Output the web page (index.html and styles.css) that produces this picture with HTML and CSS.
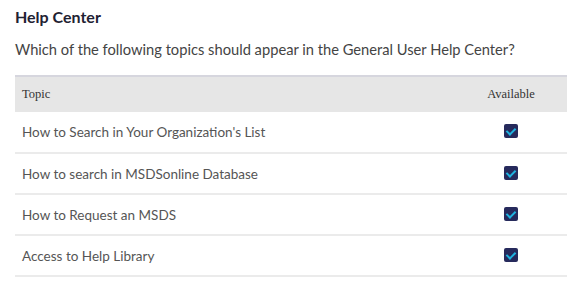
FILE: index.html
```html
<!DOCTYPE html>
<html lang="en">
<head>
    <meta charset="UTF-8">
    <title>Help Center</title>
    <link rel="stylesheet" href="styles.css">
</head>
<body>
    <div class="panel">
        <h2>Help Center</h2>
        <p class="question">Which of the following topics should appear in the General User Help Center?</p>

        <table class="topics">
            <thead>
                <tr>
                    <th class="topic-col">Topic</th>
                    <th class="avail-col">Available</th>
                </tr>
            </thead>
            <tbody>
                <tr>
                    <td>How to Search in Your Organization's List</td>
                    <td class="avail-col"><span class="check"></span></td>
                </tr>
                <tr>
                    <td>How to search in MSDSonline Database</td>
                    <td class="avail-col"><span class="check"></span></td>
                </tr>
                <tr>
                    <td>How to Request an MSDS</td>
                    <td class="avail-col"><span class="check"></span></td>
                </tr>
                <tr>
                    <td>Access to Help Library</td>
                    <td class="avail-col"><span class="check"></span></td>
                </tr>
            </tbody>
        </table>
    </div>
</body>
</html>
```

FILE: styles.css
```css
* {
    box-sizing: border-box;
    margin: 0;
    padding: 0;
}

body {
    font-family: Lato, 'Open Sans', sans-serif;
    background: #fff;
    color: #555;
}

.panel {
    padding: 7px 13px 0 15px;
}

h2 {
    font-size: 16px;
    font-weight: 700;
    color: #1f2233;
    line-height: 20px;
    margin-bottom: 13px;
}

.question {
    font-size: 14.7px;
    color: #444;
    line-height: 18px;
    margin-bottom: 17px;
}

.topics {
    width: 552px;
    border-collapse: collapse;
}

.topics th {
    font-family: 'Liberation Serif', serif;
    font-weight: 400;
    font-size: 12.5px;
    color: #333;
    background: #e6e6e6;
    border-top: 2px solid #d6d6de;
    height: 36px;
    padding: 0 7px;
    text-align: left;
}

.topics th.avail-col {
    text-align: center;
}

.topics td {
    font-size: 13.5px;
    color: #555;
    height: 41px;
    padding: 0 7px;
    border-bottom: 2px solid #ebebeb;
}

.avail-col {
    width: 112px;
    text-align: center;
}

.check {
    display: inline-block;
    width: 14px;
    height: 14px;
    background: #262a5c;
    border-radius: 2px;
    position: relative;
    vertical-align: middle;
    top: -2px;
}

.check::after {
    content: "";
    position: absolute;
    left: 4px;
    top: 2px;
    width: 4px;
    height: 7px;
    border: solid #1fb3e0;
    border-width: 0 2px 2px 0;
    transform: rotate(45deg);
}
```
